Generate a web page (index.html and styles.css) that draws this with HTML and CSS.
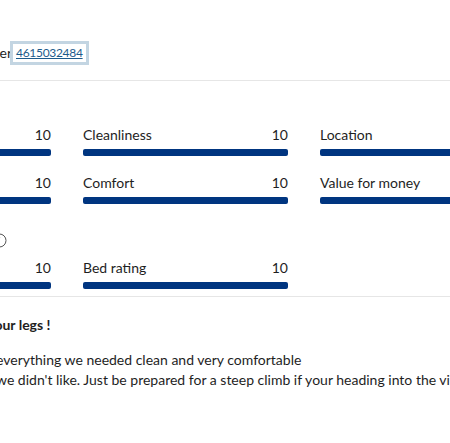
FILE: index.html
```html
<!DOCTYPE html>
<html>
<head>
    <title>Guest review</title>
    <link rel="stylesheet" href="styles.css">
</head>
<body>
    <div class="review">
        <!-- Booking reference -->
        <div class="review-header">
            <span class="ref-label">Booking number</span>
            <a class="ref-link" href="#">4615032484</a>
        </div>

        <!-- Category scores -->
        <div class="scores">
            <div class="score-grid">
                <div class="score">
                    <div class="score-head"><span>Staff</span><span>10</span></div>
                    <div class="bar"></div>
                </div>
                <div class="score">
                    <div class="score-head"><span>Cleanliness</span><span>10</span></div>
                    <div class="bar"></div>
                </div>
                <div class="score">
                    <div class="score-head"><span>Location</span><span>10</span></div>
                    <div class="bar"></div>
                </div>
                <div class="score">
                    <div class="score-head"><span>Facilities</span><span>10</span></div>
                    <div class="bar"></div>
                </div>
                <div class="score">
                    <div class="score-head"><span>Comfort</span><span>10</span></div>
                    <div class="bar"></div>
                </div>
                <div class="score">
                    <div class="score-head"><span>Value for money</span><span>10</span></div>
                    <div class="bar"></div>
                </div>
            </div>

            <div class="sub-title">
                <span>Hotel scores</span>
                <svg class="info-icon" width="15" height="15" viewBox="0 0 15 15">
                    <circle cx="7.5" cy="7.5" r="6.5" fill="none" stroke="#555" stroke-width="1"/>
                    <rect x="7" y="6.5" width="1" height="4.5" fill="#555"/>
                    <circle cx="7.5" cy="4.6" r="0.7" fill="#555"/>
                </svg>
            </div>

            <div class="score-grid">
                <div class="score">
                    <div class="score-head"><span>Room quality</span><span>10</span></div>
                    <div class="bar"></div>
                </div>
                <div class="score">
                    <div class="score-head"><span>Bed rating</span><span>10</span></div>
                    <div class="bar"></div>
                </div>
            </div>
        </div>

        <!-- Review text -->
        <div class="review-body">
            <p class="review-title">Save your legs !</p>
            <div class="review-line">
                <span class="line-label">Liked</span>
                <span>everything we needed clean and very comfortable</span>
            </div>
            <div class="review-line">
                <span class="line-label">Disliked</span>
                <span>we didn't like. Just be prepared for a steep climb if your heading into the village</span>
            </div>
        </div>
    </div>
</body>
</html>
```

FILE: styles.css
```css
body {
    margin: 0;
    font-family: Lato, "Open Sans", sans-serif;
    font-size: 14px;
    color: #1e1e1e;
    background: white;
    overflow: hidden;
}

.review {
    margin-left: -154px;
    width: 800px;
}

/* Reference row at the top */
.review-header {
    display: flex;
    align-items: center;
    padding: 43px 0 17px;
    line-height: 20px;
    border-bottom: 1px solid #e6e6e6;
    white-space: nowrap;
}

.ref-label {
    width: 166px;
    text-align: right;
}

.ref-link {
    display: inline-block;
    font-size: 12px;
    letter-spacing: -0.3px;
    line-height: 18px;
    color: #1c5b8c;
    text-decoration: underline;
    outline: 3px solid #c3d5e2;
    padding: 0 3px;
    margin-left: 1px;
}

.scores {
    padding: 44px 0 7px;
    border-bottom: 1px solid #e6e6e6;
}

.score-grid {
    display: grid;
    grid-template-columns: repeat(3, 205px);
    column-gap: 32px;
    row-gap: 17px;
}

.score-head {
    display: flex;
    justify-content: space-between;
    line-height: 20px;
}

.bar {
    height: 7px;
    margin-top: 4px;
    background-color: #003580;
    border-radius: 2px;
}

.sub-title {
    display: flex;
    align-items: center;
    justify-content: space-between;
    width: 161px;
    height: 20px;
    margin: 26px 0 8px;
}

.info-icon {
    display: block;
}

/* Review text */
.review-body {
    padding-top: 18px;
}

.review-title {
    margin: 0 0 15px 109px;
    font-weight: bold;
    line-height: 20px;
}

.review-line {
    display: flex;
    line-height: 20px;
    white-space: nowrap;
}

.line-label {
    width: 150px;
    flex-shrink: 0;
}
```
